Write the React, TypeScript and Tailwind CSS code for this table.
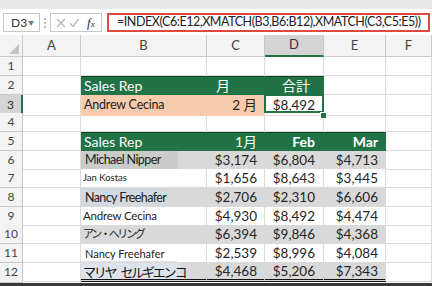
import React from "react";

const GRID = "grid grid-cols-[23px_58px_126px_58px_59px_62px_1fr]";
const HEIGHTS = ["h-[19px]", "h-[19px]", "h-[18px]", "h-[19px]", "h-[19px]", "h-[18px]", "h-[19px]", "h-[19px]", "h-[18px]", "h-[19px]", "h-[19px]", "h-[18px]"];

function Cell({ cls = "", b = "border-[#dadada]", children }: { cls?: string; b?: string; children?: React.ReactNode }) {
  return (
    <div className={`relative flex items-center overflow-hidden whitespace-nowrap border-r border-b ${b} ${cls}`}>{children}</div>
  );
}

function RowHead({ n, active = false }: { n: number; active?: boolean }) {
  return active ? (
    <div className="flex items-center justify-center border-b border-r-2 border-b-[#c6c6c6] border-r-[#217346] bg-[#d4d4d4] text-[12px] text-[#333]">{n}</div>
  ) : (
    <div className="flex items-center justify-center border-b border-r border-[#c9c9c9] bg-[#f3f3f3] text-[12px] text-[#444]">{n}</div>
  );
}

type Rep = { c: string; d: string; e: string; band: boolean; label: React.ReactNode };

const reps: Rep[] = [
  { c: "$3,174", d: "$6,804", e: "$4,713", band: true,
    label: <span className="h-full w-[97px] bg-[#cbcbcb] pl-[4px] text-[12.5px] leading-[18px] tracking-[-0.6px] text-[#222]">Michael Nipper</span> },
  { c: "$1,656", d: "$8,643", e: "$3,445", band: false,
    label: <span className="pl-[2px] text-[9.5px] text-[#222]">Jan Kostas</span> },
  { c: "$2,706", d: "$2,310", e: "$6,606", band: true,
    label: <span className="h-full w-[86px] bg-[#d3d9e1] pl-[4px] text-[12.5px] leading-[19px] tracking-[-0.6px] text-[#222]">Nancy Freehafer</span> },
  { c: "$4,930", d: "$8,492", e: "$4,474", band: false,
    label: <span className="h-full w-[92px] bg-white pl-[2px] text-[11.5px] leading-[18px] tracking-[-0.2px] text-[#222]">Andrew Cecina</span> },
  { c: "$6,394", d: "$9,846", e: "$4,368", band: true,
    label: <span className="pl-[2px] text-[11px] tracking-[-2.3px] text-[#222]">アン・ヘリング</span> },
  { c: "$2,539", d: "$8,996", e: "$4,084", band: false,
    label: <span className="h-full w-[96px] bg-white pl-[4px] text-[11px] leading-[19px] text-[#222] shadow-[inset_0_-1px_0_#e2e2e2]">Nancy Freehafer</span> },
  { c: "$4,468", d: "$5,206", e: "$7,343", band: true,
    label: (
      <span className="h-full w-[99px] bg-[#dde3ea] pl-[2px] text-[13px] leading-[18px] tracking-[-2.2px] text-[#111]">
        マリヤ<span className="ml-[5px]">セルギエンコ</span>
      </span>
    ) },
];

export default function App() {
  return (
    <div className="h-[286px] w-[432px] overflow-hidden bg-white font-[Lato,'Noto_Sans_CJK_JP',sans-serif] text-[#222]">
      {/* formula bar */}
      <div className="h-[35px] bg-white">
        <div className="h-[9px] bg-[#e9e9e9]" />
        <div className="flex items-start pt-[4px]">
          <div className="ml-[3px] flex h-[19px] w-[37px] items-center justify-between border border-[#c6c6c6] pl-[7px] pr-[5px] text-[12px] text-[#333]">
            <span>D3</span>
            <span className="text-[6px] text-[#777]">▼</span>
          </div>
          <div className="ml-[2px] flex h-[19px] w-[6px] flex-col items-center justify-center gap-[2px]">
            <span className="h-[2px] w-[2px] bg-[#bbb]" />
            <span className="h-[2px] w-[2px] bg-[#bbb]" />
            <span className="h-[2px] w-[2px] bg-[#bbb]" />
          </div>
          <div className="ml-[2px] flex h-[19px] w-[52px] items-center border border-[#c6c6c6] pl-[4px]">
            <svg width="10" height="10" viewBox="0 0 10 10" className="ml-[1px]">
              <path d="M1 1 L9 9 M9 1 L1 9" stroke="#b7b7b7" strokeWidth="1.3" fill="none" />
            </svg>
            <svg width="10" height="10" viewBox="0 0 10 10" className="ml-[3px]">
              <path d="M1 5.5 L4 8.5 L9.5 1" stroke="#b7b7b7" strokeWidth="1.3" fill="none" />
            </svg>
            <span className="ml-[8px] font-['Liberation_Serif',serif] text-[13px] italic text-[#333]">
              f<span className="text-[9px]">x</span>
            </span>
          </div>
          <div className="ml-[5px] flex h-[19px] w-[323px] items-center overflow-hidden whitespace-nowrap border-2 border-[#dc4b3e] pl-[8px] text-[12.5px] tracking-[-0.45px] text-[#222]">
            =INDEX(C6:E12,XMATCH(B3,B6:B12),XMATCH(C3,C5:E5))
          </div>
        </div>
      </div>

      {/* column headers */}
      <div className={`${GRID} h-[22px] text-[13px] text-[#444]`}>
        <div className="relative border-b border-r border-[#c9c9c9] bg-[#f3f3f3]">
          <svg width="10" height="10" viewBox="0 0 10 10" className="absolute bottom-[2px] right-[3px]">
            <path d="M10 0 L10 10 L0 10 Z" fill="#c3c3c3" />
          </svg>
        </div>
        {["A", "B", "C", "D", "E", "F"].map((l) =>
          l === "D" ? (
            <div key={l} className="flex items-center justify-center border-r border-b-2 border-r-[#c9c9c9] border-b-[#217346] bg-[#d4d4d4] text-[#333]">{l}</div>
          ) : (
            <div key={l} className="flex items-center justify-center border-b border-r border-[#c9c9c9] bg-[#f3f3f3]">{l}</div>
          )
        )}
      </div>

      {/* row 1 */}
      <div className={`${GRID} ${HEIGHTS[0]}`}>
        <RowHead n={1} />
        <Cell /><Cell /><Cell /><Cell /><Cell /><Cell />
      </div>

      {/* row 2 */}
      <div className={`${GRID} ${HEIGHTS[1]} text-[14px] text-white`}>
        <RowHead n={2} />
        <Cell />
        <Cell b="border-[#217346]" cls="bg-[#217346] pl-[3px] shadow-[inset_0_1px_0_#123d25]">Sales Rep</Cell>
        <Cell b="border-[#217346]" cls="bg-[#217346] pl-[9px] shadow-[inset_0_1px_0_#123d25]">月</Cell>
        <Cell b="border-[#217346]" cls="bg-[#217346] justify-end pr-[13px] shadow-[inset_0_1px_0_#123d25]">合計</Cell>
        <Cell /><Cell />
      </div>

      {/* row 3 */}
      <div className={`${GRID} ${HEIGHTS[2]} text-[13.5px]`}>
        <RowHead n={3} active />
        <Cell />
        <Cell b="border-[#f8cbad]" cls="bg-[#f8cbad] pl-[3px] text-[12.5px] tracking-[-0.2px]">Andrew Cecina</Cell>
        <Cell b="border-[#f8cbad]" cls="bg-[#f8cbad] justify-end pr-[7px]">2 月</Cell>
        <Cell cls="justify-end pr-[8px] !overflow-visible z-10">
          $8,492
          <span className="pointer-events-none absolute -left-[1px] -top-[1px] h-[19px] w-[60px] border-2 border-[#217346]" />
          <span className="absolute -bottom-[4px] -right-[4px] h-[7px] w-[7px] border border-white bg-[#217346]" />
        </Cell>
        <Cell /><Cell />
      </div>

      {/* row 4 */}
      <div className={`${GRID} ${HEIGHTS[3]}`}>
        <RowHead n={4} />
        <Cell /><Cell /><Cell /><Cell /><Cell /><Cell />
      </div>

      {/* row 5 */}
      <div className={`${GRID} ${HEIGHTS[4]} text-[14px] text-white`}>
        <RowHead n={5} />
        <Cell />
        <Cell b="border-[#217346]" cls="bg-[#217346] pl-[3px] shadow-[inset_0_1px_0_#123d25]">Sales Rep</Cell>
        <Cell b="border-[#217346]" cls="bg-[#217346] justify-end pr-[7px] shadow-[inset_0_1px_0_#123d25]">1月</Cell>
        <Cell b="border-[#217346]" cls="bg-[#217346] justify-end pr-[8px] font-bold shadow-[inset_0_1px_0_#123d25]">Feb</Cell>
        <Cell b="border-[#217346]" cls="bg-[#217346] justify-end pr-[7px] font-bold shadow-[inset_0_1px_0_#123d25]">Mar</Cell>
        <Cell />
      </div>

      {/* rows 6-12 */}
      {reps.map((r, i) => {
        const last = i === reps.length - 1;
        const band = r.band ? "bg-[#d9d9d9]" : "bg-white";
        const b = r.band ? "border-[#d9d9d9]" : "border-[#dadada]";
        const bottom = last ? "!border-b-[3px] border-double !border-b-[#111]" : "";
        return (
          <div key={i} className={`${GRID} ${HEIGHTS[5 + i]} text-[13.5px] text-[#262626]`}>
            <RowHead n={6 + i} />
            <Cell />
            <Cell b={b} cls={`${band} ${bottom} items-stretch`}>
              <div className="flex items-center">{r.label}</div>
            </Cell>
            <Cell b={b} cls={`${band} ${bottom} justify-end pr-[7px]`}>{r.c}</Cell>
            <Cell b={b} cls={`${band} ${bottom} justify-end pr-[8px]`}>{r.d}</Cell>
            <Cell b={b} cls={`${band} ${bottom} justify-end pr-[7px]`}>{r.e}</Cell>
            <Cell />
          </div>
        );
      })}

      {/* row 13 (partial) */}
      <div className={`${GRID} h-[2px]`}>
        <div className="border-r border-b border-[#c9c9c9] bg-[#f3f3f3]" />
        <div className="border-r border-[#dadada]" /><div className="border-r border-[#dadada]" />
        <div className="border-r border-[#dadada]" /><div className="border-r border-[#dadada]" />
        <div className="border-r border-[#dadada]" /><div />
      </div>
      <div className="h-[3px] bg-[#3a3a3a]" />
    </div>
  );
}
